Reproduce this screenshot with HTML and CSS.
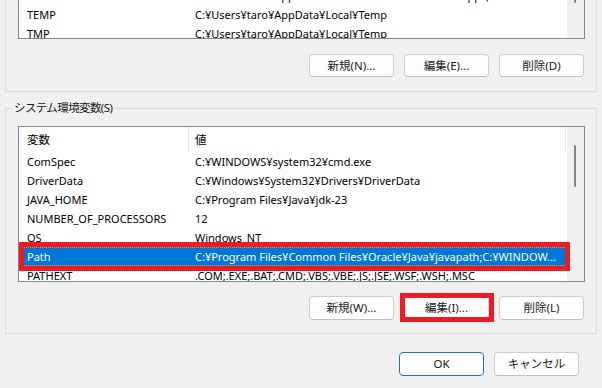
FILE: index.html
```html
<!DOCTYPE html>
<html lang="ja">
<head>
<meta charset="utf-8">
<title>環境変数</title>
<link rel="stylesheet" href="styles.css">
</head>
<body>
<div class="group group-top">
  <div class="list list-top">
    <div class="list-body">
      <div class="row"><span class="c-name">Path</span><span class="c-val">C:¥Users¥taro¥AppData¥Local¥Microsoft¥WindowsApps;C:¥Users¥taro¥AppData¥Local¥Programs</span></div>
      <div class="row"><span class="c-name">TEMP</span><span class="c-val">C:¥Users¥taro¥AppData¥Local¥Temp</span></div>
      <div class="row"><span class="c-name">TMP</span><span class="c-val">C:¥Users¥taro¥AppData¥Local¥Temp</span></div>
    </div>
    <div class="scrollbar scrollbar-top"><div class="thumb thumb-top"></div></div>
  </div>
  <div class="buttons">
    <button class="btn">新規(N)...</button>
    <button class="btn">編集(E)...</button>
    <button class="btn">削除(D)</button>
  </div>
</div>

<div class="group group-sys">
  <div class="legend">システム環境変数(S)</div>
  <div class="list list-sys">
    <div class="list-body">
      <div class="header"><span class="h-name">変数</span><span class="h-val">値</span></div>
      <div class="row"><span class="c-name">ComSpec</span><span class="c-val">C:¥WINDOWS¥system32¥cmd.exe</span></div>
      <div class="row"><span class="c-name">DriverData</span><span class="c-val">C:¥Windows¥System32¥Drivers¥DriverData</span></div>
      <div class="row"><span class="c-name">JAVA_HOME</span><span class="c-val">C:¥Program Files¥Java¥jdk-23</span></div>
      <div class="row"><span class="c-name">NUMBER_OF_PROCESSORS</span><span class="c-val">12</span></div>
      <div class="row"><span class="c-name">OS</span><span class="c-val">Windows_NT</span></div>
      <div class="row selected"><span class="c-name">Path</span><span class="c-val">C:¥Program Files¥Common Files¥Oracle¥Java¥javapath;C:¥WINDOW...</span></div>
      <div class="row"><span class="c-name">PATHEXT</span><span class="c-val">.COM;.EXE;.BAT;.CMD;.VBS;.VBE;.JS;.JSE;.WSF;.WSH;.MSC</span></div>
    </div>
    <div class="scrollbar scrollbar-sys"><div class="thumb thumb-sys"></div></div>
  </div>
  <div class="buttons buttons-sys">
    <button class="btn">新規(W)...</button>
    <button class="btn marked">編集(I)...</button>
    <button class="btn">削除(L)</button>
  </div>
</div>

<div class="footer">
  <button class="btn btn-default">OK</button>
  <button class="btn">キャンセル</button>
</div>
</body>
</html>
```

FILE: styles.css
```css
html, body {
  margin: 0;
  padding: 0;
}

body {
  width: 602px;
  height: 388px;
  overflow: hidden;
  background: #f0f0f0;
  font-family: "Noto Sans", "Noto Sans CJK JP", sans-serif;
  font-size: 11px;
  color: #000;
}

.group {
  border: 1px solid #dcdcdc;
  margin: 0 5px;
  padding: 0 11px 14px 12px;
}

.group-top {
  margin-top: -16px;
}

.group-sys {
  margin-top: 16px;
  padding-bottom: 13px;
}

.legend {
  width: fit-content;
  margin: -9px 0 0 -6px;
  padding: 0 2px;
  background: #f0f0f0;
  line-height: 16px;
  font-size: 11.5px;
  color: #1a1a1a;
  letter-spacing: -0.6px;
}

.list {
  display: flex;
  border: 1px solid #828790;
  background: #fff;
  overflow: hidden;
}

.list-top {
  height: 52px;
}

.list-sys {
  height: 154px;
  margin-top: 10px;
}

.list-body {
  flex: 1;
  min-width: 0;
  display: flex;
  flex-direction: column;
}

.header {
  display: flex;
  height: 25px;
  line-height: 25px;
  flex-shrink: 0;
  font-size: 11.5px;
}

.h-name {
  width: 161px;
  padding-left: 8px;
  border-right: 1px solid #e5e5e5;
  flex-shrink: 0;
}

.h-val {
  flex: 1;
  padding-left: 6px;
  margin-right: 1px;
  border-right: 1px solid #e5e5e5;
}

.row {
  display: flex;
  height: 19px;
  line-height: 19px;
  flex-shrink: 0;
  white-space: nowrap;
}

.c-name {
  width: 162px;
  padding-left: 8px;
  flex-shrink: 0;
  overflow: hidden;
}

.c-val {
  flex: 1;
  min-width: 0;
  padding-left: 6px;
  overflow: hidden;
}

.row.selected {
  position: relative;
  background: #0078d7;
  color: #fff;
}

.row.selected::before {
  content: "";
  position: absolute;
  inset: 0;
  border: 1px dotted #ff8728;
}

.row.selected::after {
  content: "";
  position: absolute;
  left: 0;
  right: -3px;
  top: -5px;
  bottom: -5px;
  border: 5px solid #ed1c24;
}

.scrollbar {
  width: 17px;
  flex-shrink: 0;
  background: #f0f0f0;
  display: flex;
  flex-direction: column;
}

.thumb {
  width: 2px;
  margin-left: 7px;
  background: #858585;
  border-radius: 1px;
}

.thumb-top {
  height: 17px;
}

.scrollbar-sys {
  padding-top: 18px;
}

.thumb-sys {
  height: 42px;
}

.buttons {
  display: flex;
  justify-content: flex-end;
  gap: 10px;
  margin-top: 15px;
  padding-right: 1px;
}

.buttons-sys {
  margin-top: 14px;
}

.btn {
  width: 85px;
  height: 23px;
  padding: 0;
  font: inherit;
  font-size: 11.5px;
  color: #1b1b1b;
  background: #fdfdfd;
  border: 1px solid #d0d0d0;
  border-bottom-color: #c2c2c2;
  border-radius: 4px;
  line-height: 20px;
}

.buttons-sys .btn {
  height: 24px;
}

.btn.marked {
  position: relative;
  background: #fff;
}

.btn.marked::after {
  content: "";
  position: absolute;
  left: -5px;
  right: -6px;
  top: -4px;
  bottom: -3px;
  border: 5px solid #ed1c24;
}

.footer {
  display: flex;
  justify-content: flex-end;
  gap: 10px;
  margin-top: 18px;
  padding-right: 23px;
}

.footer .btn {
  height: 24px;
}

.btn-default {
  border-color: #2a6fc4;
}
```
